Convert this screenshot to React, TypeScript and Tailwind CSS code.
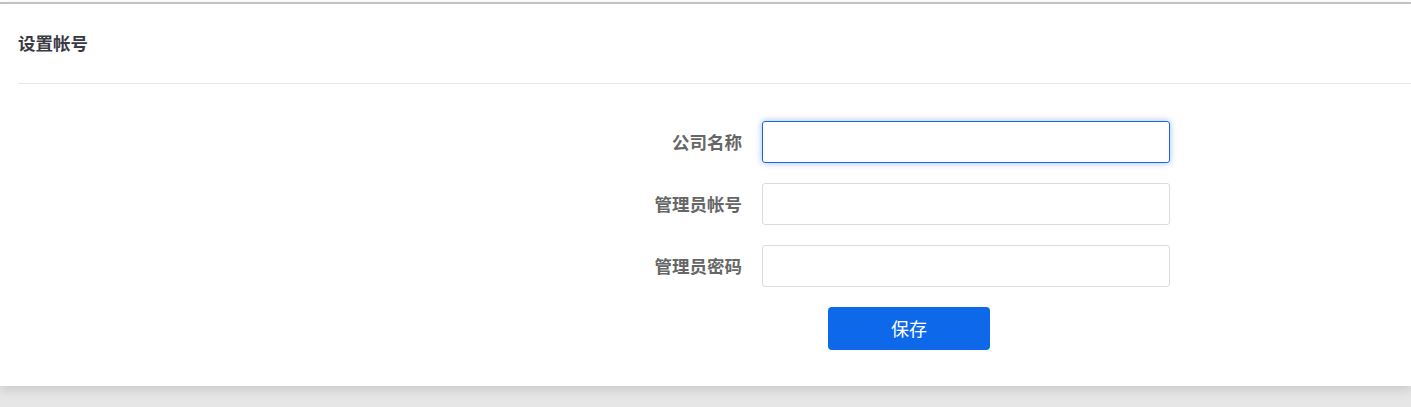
const fields = [
  { label: "公司名称", focused: true },
  { label: "管理员帐号", focused: false },
  { label: "管理员密码", focused: false },
];

export default function App() {
  return (
    <div
      className="min-h-[407px] bg-[#e6e6e6]"
      style={{ fontFamily: '"Noto Sans CJK SC", "Liberation Sans", sans-serif' }}
    >
      <div className="h-[2px] bg-white" />
      <div className="border-t-2 border-[#c2c2c2] bg-white pl-[18px] shadow-[0_4px_10px_rgba(0,0,0,0.12)]">
        <div className="flex h-[80px] items-center border-b border-[#e6e6e6]">
          <h1 className="text-[17.5px] font-bold text-[#3a3a44]">设置帐号</h1>
        </div>

        <form
          className="flex flex-col gap-5 pb-9 pt-[37px]"
          onSubmit={(e) => e.preventDefault()}
        >
          {fields.map((f) => (
            <div key={f.label} className="flex items-center">
              <label className="w-[725px] pr-[1px] text-right text-[17.5px] font-bold text-[#666]">
                {f.label}
              </label>
              <input
                type={f.label === "管理员密码" ? "password" : "text"}
                className={
                  f.focused
                    ? "ml-[19px] h-[42px] w-[408px] rounded-[3px] border border-[#1c66e5] px-3 text-sm outline-none shadow-[0_0_6px_rgba(28,102,229,0.45)]"
                    : "ml-[19px] h-[42px] w-[408px] rounded-[3px] border border-[#dcdcdc] px-3 text-sm outline-none"
                }
              />
            </div>
          ))}
          <div className="flex">
            <button
              type="submit"
              className="ml-[810px] h-[43px] w-[162px] rounded-[4px] bg-[#0d68ea] text-[18px] text-white"
            >
              保存
            </button>
          </div>
        </form>
      </div>
    </div>
  );
}
